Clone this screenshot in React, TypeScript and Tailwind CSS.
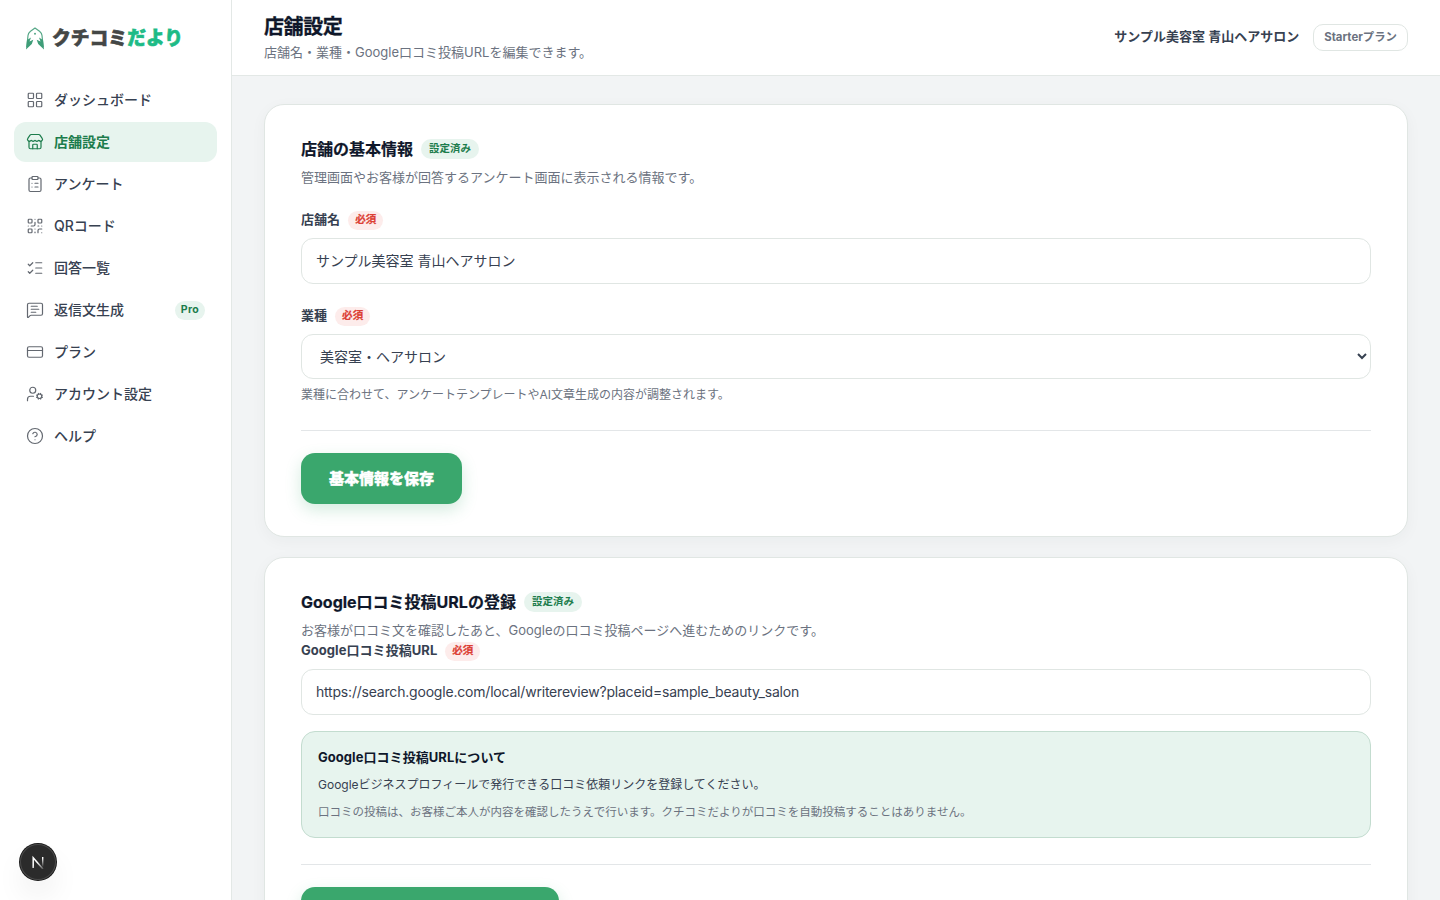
import { useState } from 'react'
import type { ReactNode } from 'react'
import {
  CircleHelp,
  ClipboardList,
  CreditCard,
  LayoutGrid,
  ListChecks,
  MessageSquareText,
  QrCode,
  Store,
  UserCog,
} from 'lucide-react'
import type { LucideIcon } from 'lucide-react'

type NavItem = {
  label: string
  icon: LucideIcon
  active?: boolean
  badge?: string
}

const navItems: NavItem[] = [
  { label: 'ダッシュボード', icon: LayoutGrid },
  { label: '店舗設定', icon: Store, active: true },
  { label: 'アンケート', icon: ClipboardList },
  { label: 'QRコード', icon: QrCode },
  { label: '回答一覧', icon: ListChecks },
  { label: '返信文生成', icon: MessageSquareText, badge: 'Pro' },
  { label: 'プラン', icon: CreditCard },
  { label: 'アカウント設定', icon: UserCog },
  { label: 'ヘルプ', icon: CircleHelp },
]

export default function App() {
  const [name, setName] = useState('サンプル美容室 青山ヘアサロン')
  const [url, setUrl] = useState(
    'https://search.google.com/local/writereview?placeid=sample_beauty_salon'
  )

  return (
    <div
      lang="ja"
      className="flex h-screen overflow-hidden bg-[#f2f4f5] font-['Inter','Noto_Sans_CJK_JP',sans-serif] text-[#374151]"
    >
      <Sidebar />

      <div className="flex min-w-0 flex-1 flex-col">
        {/* Top bar */}
        <header className="flex h-[76px] shrink-0 items-center justify-between border-b border-[#e3e8e6] bg-white px-8">
          <div>
            <h1 className="text-[20px] leading-7 font-bold tracking-[-0.02em] text-[#0f172a] [-webkit-text-stroke:0.3px_currentColor]">
              店舗設定
            </h1>
            <p className="text-[13px] leading-[22px] text-[#6b7280]">
              店舗名・業種・Google口コミ投稿URLを編集できます。
            </p>
          </div>
          <div className="flex items-center gap-3.5">
            <span className="pb-0.5 text-[13px] font-semibold whitespace-nowrap">サンプル美容室 青山ヘアサロン</span>
            <span className="flex h-[27px] items-center rounded-[10px] border border-[#e0e6e3] px-2.5 text-[11.4px] font-bold whitespace-nowrap text-[#6b7280]">
              Starterプラン
            </span>
          </div>
        </header>

        {/* Page content */}
        <main className="flex min-h-0 flex-1 flex-col gap-5 overflow-hidden px-8 pt-7">
          <Card>
            <CardHeading
              title="店舗の基本情報"
              description="管理画面やお客様が回答するアンケート画面に表示される情報です。"
            />
            <div className="mt-[22px]">
              <FieldLabel>店舗名</FieldLabel>
              <TextInput value={name} onChange={setName} />
            </div>
            <div className="mt-[22px]">
              <FieldLabel>業種</FieldLabel>
              <select className="mt-2 block h-[45px] w-full rounded-xl border border-[#e0e6e3] bg-white px-3.5 text-[14px] text-[#374151]">
                <option>美容室・ヘアサロン</option>
              </select>
              <p className="mt-1.5 text-[12px] leading-5 text-[#6b7280]">
                業種に合わせて、アンケートテンプレートやAI文章生成の内容が調整されます。
              </p>
            </div>
            <CardFooter spacing="mt-[25px]">基本情報を保存</CardFooter>
          </Card>

          <Card>
            <CardHeading
              title="Google口コミ投稿URLの登録"
              description="お客様が口コミ文を確認したあと、Googleの口コミ投稿ページへ進むためのリンクです。"
            />
            <FieldLabel>Google口コミ投稿URL</FieldLabel>
            <TextInput value={url} onChange={setUrl} className="tracking-[-0.2px]" />
            <div className="mt-4 h-[107px] rounded-[14px] border border-[#c3dccf] bg-[#e7f4ee] px-4 pt-3.5">
              <p className="text-[13px] leading-[22px] font-bold tracking-[0.05px] text-[#0f172a]">
                Google口コミ投稿URLについて
              </p>
              <p className="mt-1.5 text-[12px] leading-[22px]">
                Googleビジネスプロフィールで発行できる口コミ依頼リンクを登録してください。
              </p>
              <p className="mt-[5px] text-[11.5px] leading-[22px] text-[#6b7280]">
                口コミの投稿は、お客様ご本人が内容を確認したうえで行います。クチコミだよりが口コミを自動投稿することはありません。
              </p>
            </div>
            <CardFooter spacing="mt-[26px]">Google口コミ投稿URLを保存</CardFooter>
          </Card>
        </main>
      </div>

      <DevBadge />
    </div>
  )
}

function Sidebar() {
  return (
    <aside className="flex w-[232px] shrink-0 flex-col border-r border-[#e3e8e6] bg-white px-3.5">
      <div className="flex h-20 items-center gap-[7px] pb-1 pl-[11px]">
        <LogoMark />
        <span className="pt-0.5 text-[18.8px] font-black whitespace-nowrap text-[#444746] [-webkit-text-stroke:0.6px_currentColor]">
          クチコミ<span className="text-[#1dbb86]">だより</span>
        </span>
      </div>
      <nav className="flex flex-col gap-0.5">
        {navItems.map(({ label, icon: Icon, active, badge }) => (
          <a
            key={label}
            href="#"
            className={`flex h-10 items-center gap-2.5 rounded-xl px-3 text-[14px] ${
              active ? 'bg-[#e7f4ee] font-bold text-[#1c7c4c]' : 'font-medium text-[#374151]'
            }`}
          >
            <Icon size={18} strokeWidth={1.6} className={active ? '' : 'text-[#636870]'} />
            <span className="pb-0.5">{label}</span>
            {badge && (
              <span className="ml-auto flex h-[19px] items-center rounded-full bg-[#e7f4ee] px-1.5 text-[10.5px] font-bold tracking-[0.3px] text-[#1c7c4c]">
                {badge}
              </span>
            )}
          </a>
        ))}
      </nav>
    </aside>
  )
}

function LogoMark() {
  return (
    <svg width="20" height="24" viewBox="0 0 20 24" fill="none">
      <path
        d="M1.800 21 3 9.500C3.200 7.600 4 6.500 5.500 5.300L10 2l4.500 3.300C16 6.500 16.800 7.600 17 9.500L18.200 21"
        stroke="#57a888"
        strokeWidth="1.200"
        strokeLinejoin="round"
      />
      <path d="M1 23.500 2 14l4-2.500-1.500 4 3.800-1.800L6.800 18zM19 23.500 18 14l-4-2.500 1.500 4-3.800-1.800 1.500 4.300z" fill="#3f9d78" />
      <circle cx="10" cy="7.800" r="1" fill="#57a888" />
    </svg>
  )
}

function Card({ children }: { children: ReactNode }) {
  return (
    <section className="shrink-0 rounded-[20px] border border-[#e0e6e3] bg-white px-9 py-8 shadow-[0_4px_16px_rgba(15,60,40,0.04)]">
      {children}
    </section>
  )
}

function CardHeading({ title, description }: { title: string; description: string }) {
  return (
    <div>
      <div className="flex h-6 items-center gap-2">
        <h2 className="text-[16px] font-bold text-[#0f172a] [-webkit-text-stroke:0.2px_currentColor]">{title}</h2>
        <span className="flex h-5 items-center rounded-full bg-[#e7f4ee] px-2 text-[10.5px] font-bold text-[#1c7c4c]">
          設定済み
        </span>
      </div>
      <p className="mt-[5px] text-[13px] leading-[22px] text-[#6b7280]">{description}</p>
    </div>
  )
}

function FieldLabel({ children }: { children: ReactNode }) {
  return (
    <div className="flex h-5 items-center gap-2 text-[13px] font-bold tracking-[0.05px]">
      <span>{children}</span>
      <span className="flex h-[19px] items-center rounded-full bg-[#fdeceb] px-[7px] text-[10.5px] font-bold text-[#dc3f35] [-webkit-text-stroke:0.2px_currentColor]">
        必須
      </span>
    </div>
  )
}

function TextInput({
  value,
  onChange,
  className = '',
}: {
  value: string
  onChange: (value: string) => void
  className?: string
}) {
  return (
    <input
      value={value}
      onChange={(e) => onChange(e.target.value)}
      className={`mt-2 block h-[46px] w-full rounded-xl border border-[#e0e6e3] bg-white px-3.5 pb-0.5 text-[14px] text-[#374151] ${className}`}
    />
  )
}

function CardFooter({ spacing, children }: { spacing: string; children: ReactNode }) {
  return (
    <div className={`border-t border-[#e3e6e8] pt-[22px] ${spacing}`}>
      <button className="h-[51px] rounded-[14px] bg-[#3aa76d] px-7 pb-px text-[15px] leading-none font-extrabold text-white shadow-[0_6px_16px_rgba(58,167,109,0.22)] [-webkit-text-stroke:0.4px_currentColor]">
        {children}
      </button>
    </div>
  )
}

function DevBadge() {
  return (
    <div className="fixed bottom-5 left-5 flex size-9 items-center justify-center rounded-full bg-[#2b2b2b] shadow-[0_0_0_1px_#171717,inset_0_0_0_1px_#4a4a4a,0_16px_32px_-8px_rgba(0,0,0,0.2)]">
      <svg width="14" height="14" viewBox="0 0 14 14" fill="none">
        <defs>
          <linearGradient id="n-stem" x1="0" y1="3" x2="0" y2="12" gradientUnits="userSpaceOnUse">
            <stop stopColor="#fff" />
            <stop offset="1" stopColor="#fff" stopOpacity="0" />
          </linearGradient>
          <linearGradient id="n-diagonal" x1="7" y1="7" x2="12" y2="14" gradientUnits="userSpaceOnUse">
            <stop stopColor="#fff" />
            <stop offset="1" stopColor="#fff" stopOpacity="0.2" />
          </linearGradient>
        </defs>
        <path d="M2.200 13V2.800L12 14" stroke="url(#n-diagonal)" strokeWidth="1.500" />
        <path d="M11 2h1.400v10H11z" fill="url(#n-stem)" />
      </svg>
    </div>
  )
}
